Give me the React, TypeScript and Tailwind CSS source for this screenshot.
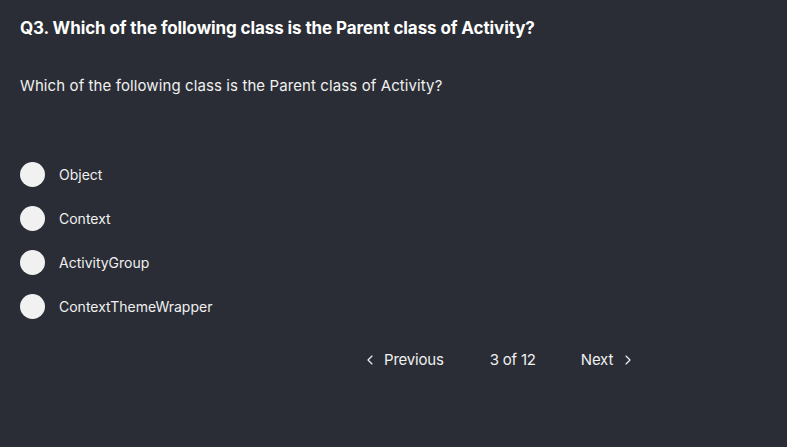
import { useState } from "react";
import { ChevronLeft, ChevronRight } from "lucide-react";

const options = ["Object", "Context", "ActivityGroup", "ContextThemeWrapper"];

export default function App() {
  const [selected, setSelected] = useState<number | null>(null);

  return (
    <div
      className="min-h-[447px] w-full bg-[#2a2d35] text-white px-5 pt-[16px]"
      style={{ fontFamily: "Inter, 'Open Sans', sans-serif" }}
    >
      {/* Question */}
      <h1 className="text-[17px] font-bold leading-[24px] tracking-[-0.1px]">
        Q3. Which of the following class is the Parent class of Activity?
      </h1>
      <p className="mt-[36px] text-[15px] leading-[20px] text-[#f0f0f0] tracking-[0.1px]">
        Which of the following class is the Parent class of Activity?
      </p>

      {/* Options */}
      <div className="mt-[66px] flex flex-col gap-[19px]">
        {options.map((opt, i) => (
          <button
            key={opt}
            onClick={() => setSelected(i)}
            className="flex items-center gap-[14px] text-left"
          >
            <span className="w-[25px] h-[25px] rounded-full bg-[#f1f1f1] flex items-center justify-center">
              {selected === i && <span className="w-[11px] h-[11px] rounded-full bg-[#2a2d35]" />}
            </span>
            <span className="text-[14px] leading-[20px] text-[#f0f0f0]">{opt}</span>
          </button>
        ))}
      </div>

      {/* Pagination */}
      <div className="mt-[30px] flex items-center pl-[342px] text-[15px] text-[#f0f0f0] tracking-[-0.2px]">
        <button className="flex items-center gap-[6px]">
          <ChevronLeft className="w-[16px] h-[16px]" strokeWidth={1.75} />
          Previous
        </button>
        <span className="ml-[46px]">3 of 12</span>
        <button className="ml-[45px] flex items-center gap-[7px]">
          Next
          <ChevronRight className="w-[16px] h-[16px]" strokeWidth={1.75} />
        </button>
      </div>
    </div>
  );
}
